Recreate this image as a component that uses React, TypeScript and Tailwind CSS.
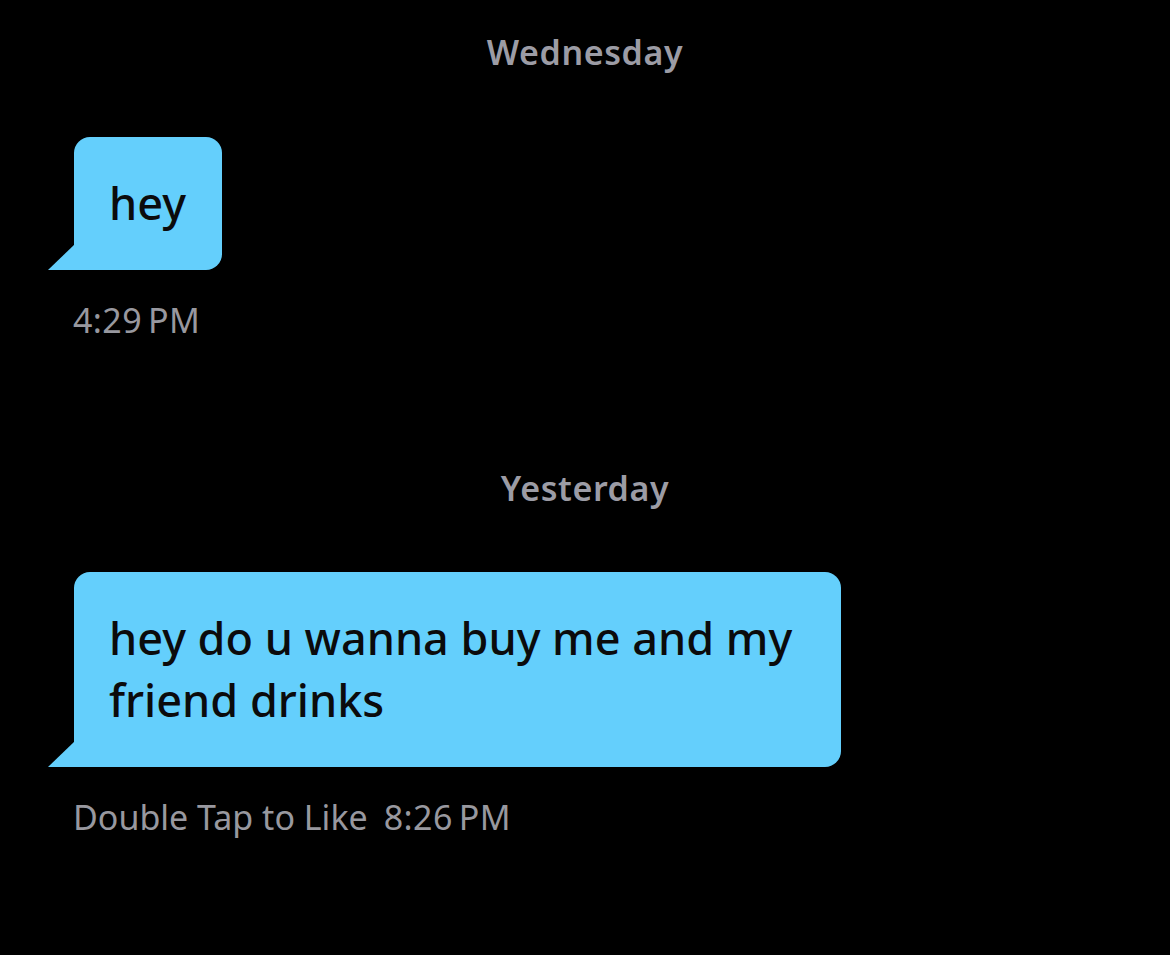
import React from 'react';

const font = { fontFamily: '"Noto Sans", "Open Sans", sans-serif' };

// Received message bubble with the little tail at bottom-left
const Bubble: React.FC<{ text: string; wide?: boolean }> = ({ text, wide }) => {
    return (
        <div
            className={`relative self-start ml-[74px] bg-[#64cffc] rounded-tl-[16px] rounded-tr-[16px] rounded-br-[16px] pl-[35px] pr-[36px] pt-[35px] pb-[36px] text-[45px] leading-[62px] font-medium text-[#0b0b0c] ${wide ? 'w-[767px]' : ''}`}
        >
            <svg
                className="absolute bottom-0 left-[-26px]"
                width="27"
                height="26"
                viewBox="0 0 27 26"
            >
                <polygon points="27,0 27,26 0,26" fill="#64cffc" />
            </svg>
            {text}
        </div>
    );
};

const DayLabel: React.FC<{ label: string; className?: string }> = ({ label, className }) => (
    <div className={`text-center text-[34px] leading-[40px] font-semibold tracking-[0.6px] text-[#9c9ca5] ${className ?? ''}`}>
        {label}
    </div>
);

export default function App() {
    return (
        <div className="w-[1170px] h-[955px] bg-black overflow-hidden flex flex-col" style={font}>
            <DayLabel label="Wednesday" className="mt-[32px]" />

            <div className="mt-[65px] flex flex-col">
                <Bubble text="hey" />
            </div>
            <div className="mt-[30px] ml-[73px] text-[34px] leading-[40px] tracking-[0.4px] text-[#98989f]">
                4:29{'\u202F'}PM
            </div>

            <DayLabel label="Yesterday" className="mt-[128px]" />

            <div className="mt-[64px] flex flex-col">
                <Bubble text="hey do u wanna buy me and my friend drinks" wide />
            </div>
            <div className="mt-[30px] ml-[73px] flex items-center gap-[16px] text-[34px] leading-[40px] text-[#98989f]">
                <span>Double Tap to Like</span>
                <span className="tracking-[0.4px]">8:26{'\u202F'}PM</span>
            </div>
        </div>
    );
}
